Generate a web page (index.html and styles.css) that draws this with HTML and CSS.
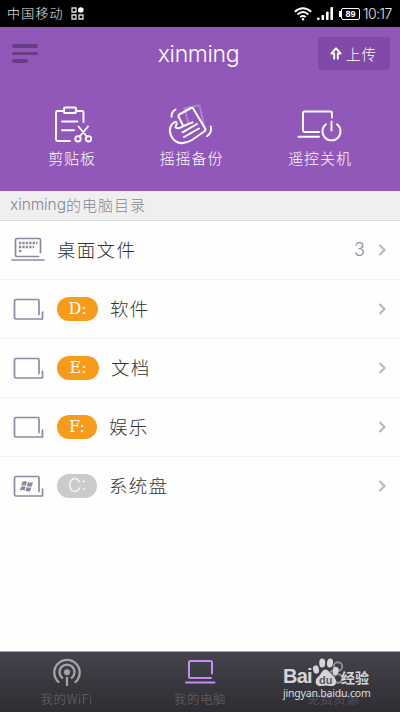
FILE: index.html
```html
<!DOCTYPE html>
<html lang="zh-CN">
<head>
<meta charset="utf-8">
<title>xinming</title>
<link rel="stylesheet" href="styles.css">
</head>
<body>
<div class="app">
  <div class="status">
    <span class="carrier">中国移动</span>
    <svg class="apps" width="13" height="13" viewBox="0 0 13 13" fill="none" stroke="#ddd" stroke-width="1.3"><path d="M1 1h4v4H1zM1 8h4v4H1zM8 8h4v4H8z"/><circle cx="9.800" cy="3" r="2.800" fill="#fff" stroke="none"/></svg>
    <svg class="wifi" width="18" height="14" viewBox="0 0 18 14" fill="none" stroke="#fff" stroke-width="1.900"><path d="M.8 4.700Q9-2.300 17.200 4.700M3.500 7.500Q9 2.700 14.500 7.500M6.200 10.100Q9 7.700 11.800 10.100"/><circle cx="9" cy="12.200" r="1.200" fill="#fff" stroke="none"/></svg>
    <svg class="signal" width="17" height="13" viewBox="0 0 17 13" fill="#fff"><rect y="10.500" width="2.600" height="2.500" rx=".8"/><rect x="4.500" y="8" width="2.600" height="5" rx=".8"/><rect x="9" y="4.500" width="2.600" height="8.500" rx=".8"/><rect x="13.400" width="2.600" height="13" rx=".8"/></svg>
    <span class="battery">89</span>
    <span class="time">10:17</span>
  </div>
  <header class="hero">
    <div class="bar">
      <div class="menu"><i></i><i></i><i></i></div>
      <h1 class="title">xinming</h1>
      <div class="upload">
        <svg width="12" height="13" viewBox="0 0 12 13" fill="none" stroke="#fff" stroke-width="1.900" stroke-linecap="round" stroke-linejoin="round"><path d="M4.200 11.800V6.500H1.400L6 1.300l4.600 5.200H7.800v5.300"/></svg>
        <span>上传</span>
      </div>
    </div>
    <div class="tools">
      <div class="tool">
        <svg width="48" height="42" viewBox="0 0 48 42" fill="none" stroke="#fff" stroke-width="1.900" stroke-linecap="round" stroke-linejoin="round"><path d="M15 7H8.500Q7 7 7 8.500v27Q7 37 8.500 37H21M26.500 7h6Q34.500 7 34.500 8.500V18M15 4.500Q15 3.500 16 3.500h10q1 0 1 1V8q0 1-1 1H16q-1 0-1-1zM13 17.500h15.500M13 26.200h12M29.500 22.500l8.300 10M39 22.500l-8.300 10"/><circle cx="29" cy="34.800" r="2.700"/><circle cx="39.500" cy="34.800" r="2.700"/></svg>
        <span>剪贴板</span>
      </div>
      <div class="tool tool-mid">
        <svg width="48" height="42" viewBox="0 0 48 42" fill="none" stroke="#fff" stroke-width="2" stroke-linecap="round" stroke-linejoin="round"><path d="M16 4.500L29.500 1.500Q31.500 1.200 32 3l4.500 21M17 6l3.500 14" stroke-opacity=".25"/><path d="M14.500 20.500L10.500 12.500Q10 11.200 11.200 10.500L23 4Q24.500 3.300 25.300 4.700L37.300 24.700Q38 26.200 36.500 27.200L24 36Q13 42.500 5.500 35.500Q-1 27 4 20.200L6.800 18Q9.200 17.300 8.500 20L7.500 23.500Q11 25.500 15.500 22L24.500 18.300M14.500 28.300L29 20M16 33L31 24.500"/><path d="M3.500 12.800Q3.200 8 7.500 5.500M42.800 22.500Q44.300 28.500 39 32.200"/></svg>
        <span>摇摇备份</span>
      </div>
      <div class="tool">
        <svg width="48" height="42" viewBox="0 0 48 42" fill="none" stroke="#fff" stroke-width="1.900" stroke-linecap="round" stroke-linejoin="round"><path d="M23 28H8.500Q7 28 7 26.500V9Q7 7.500 8.500 7.500h26q1.500 0 1.500 1.500v4.500M2.500 32.700H23"/><path d="M35.500 17.500v9M30 20.300a9 9 0 1 0 11 0"/></svg>
        <span>遥控关机</span>
      </div>
    </div>
  </header>
  <div class="section"><span class="latin">xinming</span><span>的电脑目录</span></div>
  <main class="list">
    <div class="row">
      <svg class="icon" width="36" height="26" viewBox="0 0 36 26" fill="none" stroke="#8c8aa0" stroke-width="1.700" stroke-linecap="round" stroke-linejoin="round"><path d="M27.500 19.500H6q-1.500 0-1.500-1.500V3Q4.500 1.500 6 1.500h22q1.500 0 1.500 1.500v12.500M1 23h32"/><path d="M8 6h18.500M8 10h15M8 14h2.300" stroke-width="2.300" stroke-dasharray="2.300 1.100" stroke-linecap="butt"/></svg>
      <span class="name">桌面文件</span><span class="count">3</span>
      <svg class="arrow" width="9" height="14" viewBox="0 0 9 14"><path d="M1.500 2l5 5-5 5"/></svg>
    </div>
    <div class="row">
      <svg class="icon" width="36" height="26" viewBox="0 0 36 26" fill="none" stroke="#8c8aa0" stroke-width="1.700" stroke-linecap="round" stroke-linejoin="round"><path d="M28 18.500V5q0-1.500-1.500-1.500H5Q3.500 3.500 3.500 5v16.500Q3.500 23 5 23h26.500v-7"/></svg>
      <span class="drive">D:</span><span class="name gap-d">软件</span>
      <svg class="arrow" width="9" height="14" viewBox="0 0 9 14"><path d="M1.500 2l5 5-5 5"/></svg>
    </div>
    <div class="row">
      <svg class="icon" width="36" height="26" viewBox="0 0 36 26" fill="none" stroke="#8c8aa0" stroke-width="1.700" stroke-linecap="round" stroke-linejoin="round"><path d="M28 18.500V5q0-1.500-1.500-1.500H5Q3.500 3.500 3.500 5v16.500Q3.500 23 5 23h26.500v-7"/></svg>
      <span class="drive drive-e">E:</span><span class="name gap-d">文档</span>
      <svg class="arrow" width="9" height="14" viewBox="0 0 9 14"><path d="M1.500 2l5 5-5 5"/></svg>
    </div>
    <div class="row">
      <svg class="icon" width="36" height="26" viewBox="0 0 36 26" fill="none" stroke="#8c8aa0" stroke-width="1.700" stroke-linecap="round" stroke-linejoin="round"><path d="M28 18.500V5q0-1.500-1.500-1.500H5Q3.500 3.500 3.500 5v16.500Q3.500 23 5 23h26.500v-7"/></svg>
      <span class="drive drive-f">F:</span><span class="name gap-d">娱乐</span>
      <svg class="arrow" width="9" height="14" viewBox="0 0 9 14"><path d="M1.500 2l5 5-5 5"/></svg>
    </div>
    <div class="row">
      <svg class="icon" width="36" height="26" viewBox="0 0 36 26" fill="none" stroke="#8c8aa0" stroke-width="1.700" stroke-linecap="round" stroke-linejoin="round"><path d="M28 18.500V5q0-1.500-1.500-1.500H5Q3.500 3.500 3.500 5v16.500Q3.500 23 5 23h26.500v-7"/><path d="M11.500 8.700q2.500-1.200 4.500 0l-1.200 4q-2-1.100-4.500 0zM17 9q2.300 1.200 5 .2l-1.200 4q-2.500 1-5-.2zM10 13.700q2.500-1.100 4.500 0l-1 3.800q-2.200-1.200-4.700 0zM15.500 14q2.300 1.200 5 .2l-1.100 3.800q-2.500 1.200-5-.2z" fill="#8c8aa0" stroke="none"/></svg>
      <span class="drive drive-c">C:</span><span class="name gap-d">系统盘</span>
      <svg class="arrow" width="9" height="14" viewBox="0 0 9 14"><path d="M1.500 2l5 5-5 5"/></svg>
    </div>
  </main>
  <nav class="tabs">
    <div class="tab">
      <svg width="32" height="30" viewBox="0 0 32 30" fill="none" stroke="#a5a3aa" stroke-width="2.300" stroke-linecap="round"><path d="M7.500 24A12.700 12.700 0 1 1 24.500 24M11.200 19.800A7.500 7.500 0 1 1 20.800 19.800M16 20v7"/><circle cx="16" cy="14.200" r="3" fill="#a5a3aa" stroke="none"/></svg>
      <span>我的WiFi</span>
    </div>
    <div class="tab">
      <svg width="32" height="30" viewBox="0 0 32 30" fill="none" stroke="#c78cf4" stroke-width="2" stroke-linecap="round" stroke-linejoin="round"><path d="M27 20H6.500Q5 20 5 18.500v-14Q5 3 6.500 3h20Q28 3 28 4.500V15.500M2 24.400h28.500"/></svg>
      <span>我的电脑</span>
    </div>
    <div class="tab tab-free">
      <svg width="32" height="30" viewBox="0 0 32 30" fill="none" stroke="#8f8d94" stroke-width="2"><circle cx="21" cy="8.500" r="4.200"/><circle cx="21" cy="20.500" r="4.200"/><path d="M13 14.500l5-4M13 15.500l5 3"/></svg>
      <span>免费资源</span>
    </div>
    <div class="mark">
      <div class="mark-top">
        <span class="bai">Bai</span>
        <svg width="28" height="29" viewBox="0 0 28 29" fill="#d5d4d7"><ellipse cx="4" cy="11.500" rx="3" ry="4.200" transform="rotate(-12 4 11.500)"/><ellipse cx="10.200" cy="5" rx="3" ry="4.500"/><ellipse cx="18" cy="5" rx="3" ry="4.500" transform="rotate(8 18 5)"/><ellipse cx="23.700" cy="13" rx="3" ry="4.200" transform="rotate(12 23.700 13)"/><path d="M13.500 11.500q2.500 0 4.500 3.500 1.500 2 4 4.200 3.500 3.500 1.500 7-1.700 2.500-5.500 1.700-4-.8-8 0-5 .7-6.200-2.700-1-3.700 2.700-6.700 1.500-1.300 2.700-3.500 1.800-3.500 4.300-3.500z"/></svg>
        <span class="du">du</span>
        <span class="jing">经验</span>
      </div>
      <div class="url">jingyan.baidu.com</div>
    </div>
  </nav>
</div>
</body>
</html>
```
FILE: styles.css
```css
* { box-sizing: border-box; }
body { margin: 0; font-family: "Noto Sans CJK SC", sans-serif; font-weight: 300; }
svg { display: block; flex: none; }
span { white-space: nowrap; }
.app { width: 400px; height: 712px; display: flex; flex-direction: column; background: #fefefe; overflow: hidden; }

.status { height: 27px; flex: none; background: #000; color: #e4e4e4; display: flex; align-items: center; padding: 0 7px; }
.carrier { width: 57px; font-size: 13px; letter-spacing: 1.2px; line-height: 18px; padding-bottom: 2px; }
.apps { margin-left: 7px; }
.wifi { margin-left: 210px; }
.signal { margin-left: 5px; }
.battery { position: relative; margin-left: 7px; width: 19px; height: 12px; border: 1.5px solid #fff; border-radius: 2px; font: bold 9px/10px "Liberation Sans", sans-serif; text-align: center; color: #fff; }
.battery::before { content: ""; position: absolute; left: -3px; top: 2px; width: 2px; height: 6px; background: #fff; }
.time { margin-left: 3px; font: 300 14px/20px Inter, sans-serif; letter-spacing: -.5px; }

.hero { height: 164px; flex: none; background: #9157b9; color: #fff; }
.bar { display: grid; grid-template-columns: 112px 1fr 112px; align-items: center; height: 53px; }
.menu { padding-left: 12px; display: flex; flex-direction: column; gap: 4px; }
.menu i { width: 26px; height: 3.700px; border-radius: 2px; background: #673d85; }
.menu i:last-child { width: 16px; }
.title { margin: 0; padding-right: 3px; text-align: center; font: 300 23px/30px Inter, sans-serif; letter-spacing: -.35px; }
.upload { width: 72px; height: 33px; margin-left: 30px; padding-left: 12px; border-radius: 3px; background: #8149a8; display: flex; align-items: center; gap: 4px; font-size: 14.500px; letter-spacing: 1px; line-height: 20px; }
.tools { display: grid; grid-template-columns: 80px 1fr 80px; padding: 24px 40px 0 32px; }
.tool { display: flex; flex-direction: column; align-items: center; gap: 1px; font-size: 15px; letter-spacing: .9px; line-height: 22px; }
.tool:first-child svg { margin-left: 1px; }
.tool-mid { padding-right: 9px; }

.section { height: 30px; flex: none; padding: 0 0 1px 10px; display: flex; align-items: center; background: #efefef; border-bottom: 1px solid #dadada; color: #898791; font-size: 15px; letter-spacing: 1px; line-height: 20px; }
.latin { font: 300 15.500px/20px Inter, sans-serif; letter-spacing: -.1px; }

.list { flex: 1; }
.row { height: 59px; padding: 0 13px 0 11px; display: flex; align-items: center; border-bottom: 1px solid #f2f2f2; }
.row:last-child { height: 58px; border-bottom: 0; }
.icon { margin-right: 10px; }
.name { font-size: 18.500px; letter-spacing: 1.300px; line-height: 26px; padding-bottom: 2px; color: #333; font-weight: 300; }
.gap-d { margin-left: 12px; }
.count { margin-left: auto; font: 300 18px/24px Inter, sans-serif; color: #8c8aa0; }
.arrow { margin-left: auto; fill: none; stroke: #bab9c3; stroke-width: 2.200; }
.count + .arrow { margin-left: 13px; }
.drive { width: 41px; height: 24px; border-radius: 12px; background: #f79b1c; color: #fff; font: 16px/24px "DejaVu Serif", serif; text-align: center; }
.drive-e { width: 42px; }
.drive-f, .drive-c { width: 40px; }
.drive-c { background: #cbcbcb; color: #fafafa; font: 300 18px/24px Inter, sans-serif; }

.tabs { position: relative; height: 61px; flex: none; display: grid; grid-template-columns: repeat(3, 1fr); background: linear-gradient(#45434b, #2f2d33); border-top: 1px solid #aaa9ad; }
.tab { display: flex; flex-direction: column; align-items: center; padding-top: 6px; gap: 1px; color: #69676e; font-size: 12.500px; letter-spacing: .6px; line-height: 20px; }
.tab-free { color: #5d5b62; }
.mark { position: absolute; left: 283px; top: 6px; color: #d5d4d7; }
.mark-top { display: flex; align-items: flex-end; height: 29px; }
.bai { width: 29px; font: bold 20px/22px "Liberation Sans", sans-serif; letter-spacing: -.8px; }
.du { width: 0; margin-left: -21px; font: bold 11px/14px "Liberation Sans", sans-serif; color: #5b5960; }
.jing { margin-left: 22px; font-size: 14px; font-weight: 700; line-height: 20px; }
.url { font: 10.500px/13px "Noto Sans", sans-serif; letter-spacing: -.2px; color: #dedde0; }
```
